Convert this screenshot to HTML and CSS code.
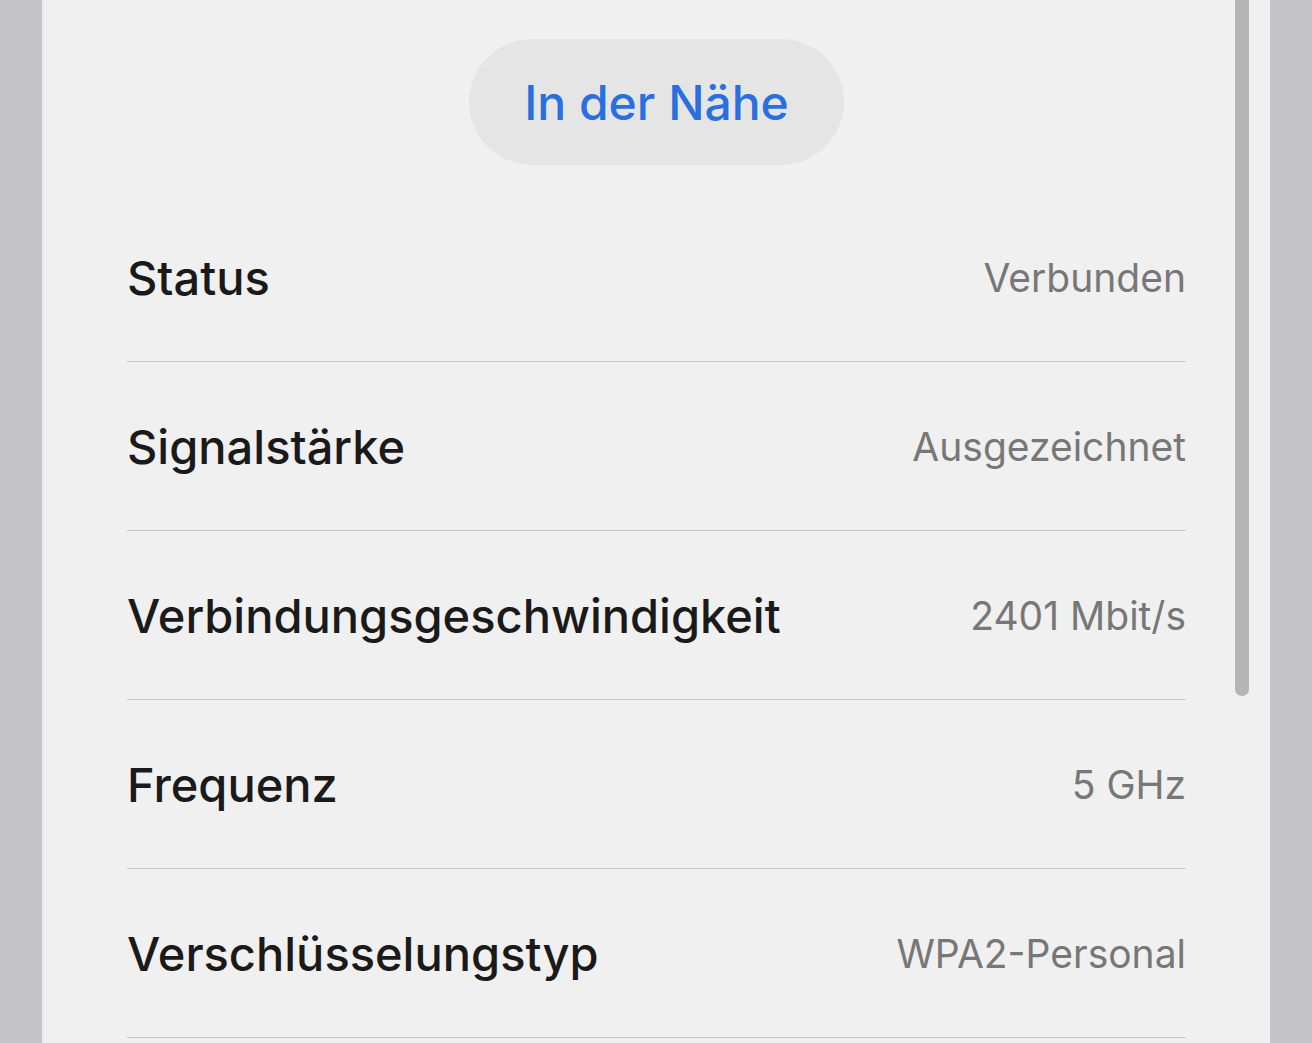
FILE: index.html
```html
<!DOCTYPE html>
<html lang="de">
<head>
  <meta charset="UTF-8">
  <title>WLAN-Details</title>
  <link rel="stylesheet" href="styles.css">
</head>
<body>
  <div class="screen">
    <div class="panel">
      <div class="top">
        <button class="pill">In der Nähe</button>
      </div>
      <div class="list">
        <div class="row"><span class="label">Status</span><span class="value">Verbunden</span></div>
        <div class="row"><span class="label">Signalstärke</span><span class="value">Ausgezeichnet</span></div>
        <div class="row"><span class="label">Verbindungsgeschwindigkeit</span><span class="value">2401 Mbit/s</span></div>
        <div class="row"><span class="label">Frequenz</span><span class="value">5 GHz</span></div>
        <div class="row"><span class="label">Verschlüsselungstyp</span><span class="value">WPA2-Personal</span></div>
      </div>
    </div>
    <div class="scrollbar"></div>
  </div>
</body>
</html>
```

FILE: styles.css
```css
body { margin: 0; background: #c4c4c6; font-family: Inter, "Noto Sans", sans-serif; overflow: hidden; }
.screen { position: relative; margin-left: 42px; width: 1228px; height: 1043px; background: #f0f0f0; border-left: 2px solid #ececec; box-sizing: border-box; }
.panel { padding: 0 84px 0 83px; }
.top { display: flex; justify-content: center; padding-top: 39px; height: 193px; box-sizing: border-box; }
.pill { width: 375px; height: 126px; border: none; border-radius: 63px; background: #e5e5e5; color: #2a6fe0; font-family: inherit; font-size: 48px; font-weight: 500; padding: 0; }
.row { display: flex; justify-content: space-between; align-items: center; height: 168px; border-bottom: 1px solid #c9c9c9; }
.label { font-size: 47px; color: #1a1a1a; font-weight: 500; }
.value { font-size: 39px; color: #777; }
.scrollbar { position: absolute; left: 1191px; top: -10px; width: 14px; height: 706px; background: #b5b5b5; border-radius: 7px; }
```
